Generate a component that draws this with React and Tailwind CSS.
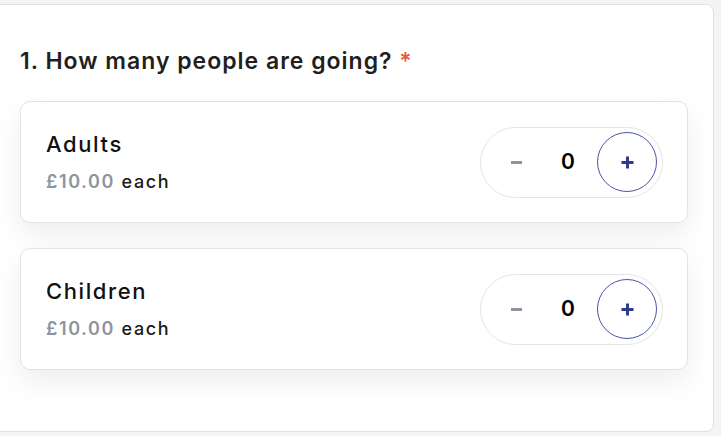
import React, { useState } from 'react';

const font = { fontFamily: 'Inter, "Noto Sans", sans-serif' };

const Counter = ({ label, price }) => {
  const [count, setCount] = useState(0);

  return (
    <div className="flex h-[122px] items-center justify-between rounded-[10px] border border-[#e3e3e3] bg-white pl-[25px] pr-[24px] shadow-[0_12px_28px_rgba(0,0,0,0.07)]">
      <div className="flex flex-col">
        <span className="text-[22px] font-medium leading-[28px] tracking-[1.6px] text-[#111]">{label}</span>
        <span className="mt-[12px] text-[18px] leading-[24px] tracking-[1.6px]">
          <span className="font-semibold text-[#8c959d]">{price}</span>{' '}
          <span className="font-medium text-[#1a1a1a]">each</span>
        </span>
      </div>

      {/* stepper */}
      <div className="flex h-[71px] w-[183px] items-center rounded-full border border-[#e4e4e4] bg-white pr-[5px]">
        <button
          onClick={() => setCount(Math.max(0, count - 1))}
          className="ml-[25px] flex h-[20px] w-[20px] items-center justify-center"
        >
          <span className="block h-[3px] w-[11px] bg-[#8c959d]" />
        </button>
        <span className="ml-[35px] w-[14px] text-center text-[21px] font-semibold text-black">{count}</span>
        <button
          onClick={() => setCount(count + 1)}
          className="ml-auto flex h-[60px] w-[60px] items-center justify-center rounded-full border border-[#4a54a8]"
        >
          <svg width="13" height="13" viewBox="0 0 13 13">
            <path d="M6.5 0.5v12M0.5 6.5h12" stroke="#2e3a8c" strokeWidth="3" />
          </svg>
        </button>
      </div>
    </div>
  );
};

export default function App() {
  return (
    <div className="min-h-[436px] overflow-hidden bg-[#f4f4f4] pr-[7px] pt-[4px]" style={font}>
      <div className="ml-[-6px] h-[428px] rounded-[8px] border border-[#e0e0e0] bg-white px-[25px] pt-[40px]">
        <h1 className="text-[23px] font-semibold leading-[32px] tracking-[1px] text-[#1f1f1f]">
          1. How many people are going? <span className="text-[#e8593a]">*</span>
        </h1>
        <div className="mt-[24px] flex flex-col gap-[25px]">
          <Counter label="Adults" price="£10.00" />
          <Counter label="Children" price="£10.00" />
        </div>
      </div>
    </div>
  );
}
